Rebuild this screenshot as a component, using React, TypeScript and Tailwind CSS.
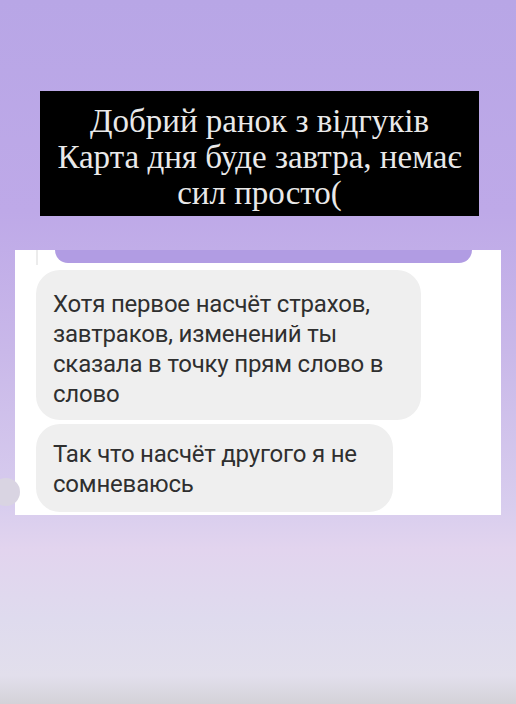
import React from "react";

const serif = { fontFamily: '"Liberation Serif", "DejaVu Serif", serif' };
const sans = { fontFamily: 'Roboto, "Noto Sans", sans-serif' };

const App = () => {
  return (
    <div className="relative h-[704px] w-[516px] overflow-hidden bg-[linear-gradient(180deg,#b8a6e6_0%,#bea9e8_30%,#c9b8e9_50%,#d8cdee_72%,#e2d4ee_78%,#dfdbee_88%,#e2dfec_96%,#d4d2d8_100%)]">
      {/* Caption */}
      <div className="pt-[91px] pl-[40px]">
        <div
          className="w-[439px] h-[125px] bg-black text-[#e9e9e9] text-[33px] leading-[36px] text-center pt-[12px] whitespace-nowrap"
          style={serif}
        >
          <p>Добрий ранок з відгуків</p>
          <p>Карта дня буде завтра, немає</p>
          <p>сил просто(</p>
        </div>
      </div>

      {/* Chat screenshot */}
      <div className="relative mt-[34px] ml-[15px] w-[486px] h-[265px] bg-white overflow-hidden">
        <div className="absolute left-[21px] top-0 w-[2px] h-[15px] bg-[#ececec]" />
        <div className="ml-[40px] w-[417px] h-[13px] bg-[#b19ce3] rounded-b-[22px]" />
        <div className="flex flex-col items-start gap-[4px] pl-[21px] pt-[7px]">
          <div
            className="w-[385px] h-[150px] bg-[#efefef] rounded-[24px] pl-[17px] pt-[19px] text-[24px] leading-[30px] tracking-[-0.2px] text-[#2f2f2f] whitespace-nowrap"
            style={sans}
          >
            Хотя первое насчёт страхов,
            <br />
            завтраков, изменений ты
            <br />
            сказала в точку прям слово в
            <br />
            слово
          </div>
          <div
            className="w-[357px] h-[88px] bg-[#efefef] rounded-[24px] pl-[17px] pt-[15px] text-[24px] leading-[30px] tracking-[-0.2px] text-[#2f2f2f] whitespace-nowrap"
            style={sans}
          >
            Так что насчёт другого я не
            <br />
            сомневаюсь
          </div>
        </div>
      </div>
      <div className="absolute left-[-8px] top-[478px] w-[28px] h-[28px] rounded-full bg-[#d9d4e2]" />
    </div>
  );
};

export default App;
